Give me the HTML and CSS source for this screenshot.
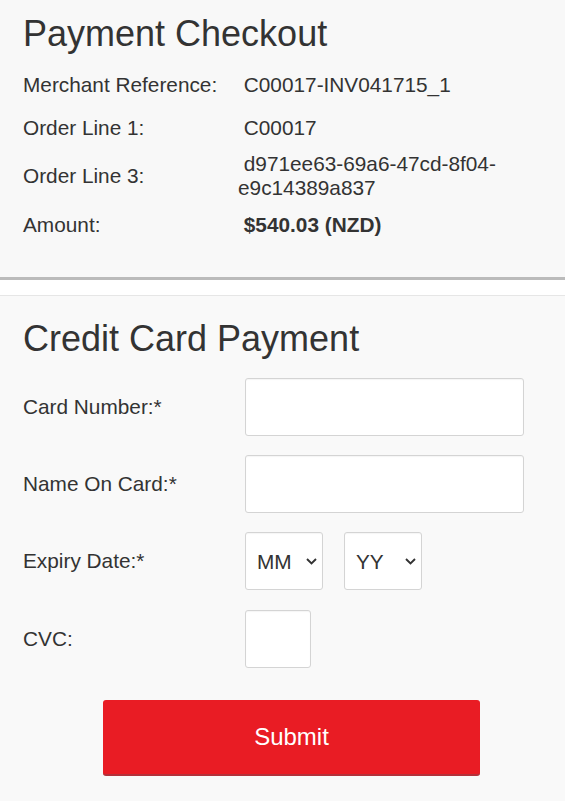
FILE: index.html
```html
<!DOCTYPE html>
<html lang="en">
<head>
    <meta charset="UTF-8">
    <meta name="viewport" content="width=device-width, initial-scale=1.0">
    <title>Payment Checkout</title>
    <link rel="stylesheet" href="styles.css">
</head>
<body>

    <!-- Order Summary -->
    <section class="summary">
        <h1>Payment Checkout</h1>
        <div class="details">
            <div class="detail-row">
                <span class="detail-label">Merchant Reference:</span>
                <span class="detail-value">&nbsp;C00017-INV041715_1</span>
            </div>
            <div class="detail-row">
                <span class="detail-label">Order Line 1:</span>
                <span class="detail-value">&nbsp;C00017</span>
            </div>
            <div class="detail-row">
                <span class="detail-label">Order Line 3:</span>
                <span class="detail-value">&nbsp;d971ee63-69a6-47cd-8f04-e9c14389a837</span>
            </div>
            <div class="detail-row">
                <span class="detail-label">Amount:</span>
                <span class="detail-value"><strong>&nbsp;$540.03 (NZD)</strong></span>
            </div>
        </div>
    </section>

    <!-- Card Form -->
    <section class="payment">
        <h1>Credit Card Payment</h1>
        <form class="card-form" onsubmit="return false;">
            <div class="form-row">
                <label for="cardNumber">Card Number:*</label>
                <input type="text" id="cardNumber" class="field field-wide">
            </div>
            <div class="form-row">
                <label for="cardName">Name On Card:*</label>
                <input type="text" id="cardName" class="field field-wide">
            </div>
            <div class="form-row">
                <label for="expMonth">Expiry Date:*</label>
                <div class="expiry">
                    <span class="select-wrap">
                        <select id="expMonth" class="field field-select">
                            <option>MM</option>
                        </select>
                        <svg class="chevron" width="11" height="7" viewBox="0 0 11 7"><path d="M1 1l4.5 4.5 4.5-4.5" fill="none" stroke="#333" stroke-width="1.9"/></svg>
                    </span>
                    <span class="select-wrap">
                        <select id="expYear" class="field field-select">
                            <option>YY</option>
                        </select>
                        <svg class="chevron" width="11" height="7" viewBox="0 0 11 7"><path d="M1 1l4.5 4.5 4.5-4.5" fill="none" stroke="#333" stroke-width="1.9"/></svg>
                    </span>
                </div>
            </div>
            <div class="form-row form-row-last">
                <label for="cvc">CVC:</label>
                <input type="text" id="cvc" class="field field-cvc">
            </div>
            <div class="form-actions">
                <button type="submit" class="submit-btn">Submit</button>
            </div>
        </form>
    </section>

</body>
</html>
```

FILE: styles.css
```css
/* Base */
body { margin: 0; background: #fff; color: #333; font-family: "Liberation Sans", Arial, sans-serif; }
h1 { margin: 0; font-size: 36px; font-weight: normal; line-height: 40px; }

/* Order Summary */
.summary { background: #f8f8f8; padding: 14px 23px 31px; border-bottom: 3px solid #bbb; }
.details { margin-top: 9px; font-size: 20.8px; line-height: 24px; }
.detail-row { display: flex; align-items: center; min-height: 37px; padding: 3px 0; }
.detail-label { width: 215px; flex-shrink: 0; }
.detail-value { flex: 1; }

/* Card Form */
.payment { margin-top: 15px; border-top: 1px solid #e6e6e6; background: #f9f9f9; padding: 23px 23px 25px; }
.card-form { margin-top: 19px; font-size: 20.8px; }
.form-row { display: flex; align-items: center; margin-bottom: 19px; }
.form-row-last { margin-top: 20px; }
.form-row label { width: 222px; flex-shrink: 0; }
.field { box-sizing: border-box; height: 58px; border: 1px solid #d4d4d4; border-radius: 3px; background: #fff; box-shadow: inset 0 1px 1px rgba(0,0,0,0.04); font: inherit; color: #333; }
.field-wide { width: 279px; }
.field-cvc { width: 66px; }
.expiry { display: flex; gap: 21px; }
.select-wrap { position: relative; display: block; }
.field-select { width: 78px; padding: 0 0 0 11px; appearance: none; -webkit-appearance: none; }
.chevron { position: absolute; right: 6px; top: 26px; pointer-events: none; }

.form-actions { padding-top: 13px; }
.submit-btn { margin-left: 80px; width: 377px; height: 76px; background: #e91c24; color: #fff; border: none; border-bottom: 2px solid #b3313a; border-radius: 3px; font-family: inherit; font-size: 24px; cursor: pointer; }
```
